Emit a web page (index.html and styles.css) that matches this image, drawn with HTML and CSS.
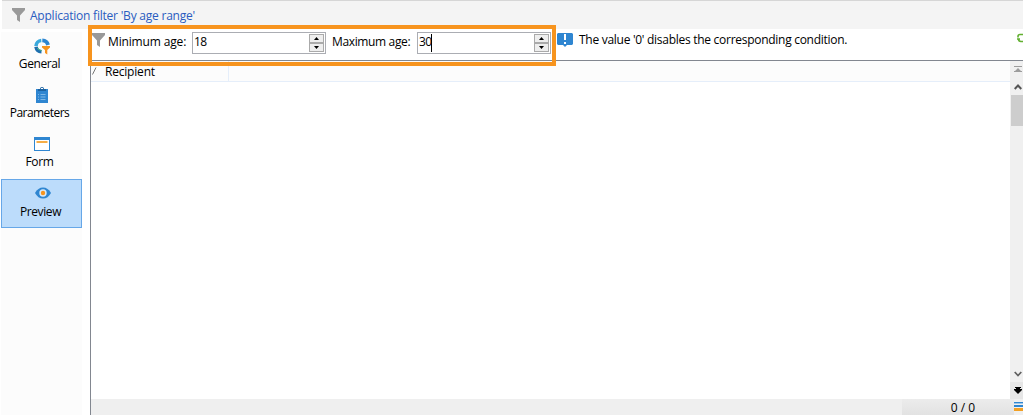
FILE: index.html
```html
<!DOCTYPE html>
<html lang="en">
<head>
<meta charset="utf-8">
<title>Application filter</title>
<link rel="stylesheet" href="styles.css">
</head>
<body>
<div class="app">
  <header class="titlebar">
    <svg class="funnel" width="13" height="14" viewBox="0 0 13 14"><path d="M0 0h13v2L8 7.5V14L5 12V7.5L0 2z"/></svg>
    <span class="title">Application filter 'By age range'</span>
  </header>
  <div class="body">
    <nav class="sidebar">
      <a class="item">
        <svg width="18" height="18" viewBox="0 0 18 18" fill="none">
          <path d="M8.300 3.500A5.800 5.800 0 0 0 3 9" stroke="#3aa9dc" stroke-width="3.600"/>
          <path d="M3 9.800A6 6 0 0 0 8.500 14.800" stroke="#1d6fae" stroke-width="3.600"/>
          <path d="M9.300 3.300A6 6 0 0 1 15 8" stroke="#2f86d1" stroke-width="3.800"/>
          <path d="M4.500 11A5 5 0 0 0 9 13.500" stroke="#55b88a" stroke-width="1.200"/>
          <path d="M9 9h8v1.400L14.300 13v4.600L12 16v-3L9 10.400z" fill="#f7941e"/>
        </svg>
        <span class="l-general">General</span>
      </a>
      <a class="item">
        <svg width="18" height="18" viewBox="0 0 18 18">
          <path d="M3 3h12v14H3z" fill="#2f86d1"/>
          <path d="M5 5V3h2a2 2 0 0 1 4 0h2v2z" fill="#1c62a0"/>
          <path d="M8 2h2v1H8z" fill="#fff"/>
          <path d="M5 8.500h1m1.500 0h5M5 11h1m1.500 0h5M5 13.500h1m1.500 0h5" stroke="#7fb8e6"/>
        </svg>
        <span class="l-parameters">Parameters</span>
      </a>
      <a class="item">
        <svg width="18" height="18" viewBox="0 0 18 18">
          <path d="M1 2h16v14H1z" fill="#2f86d1"/><path d="M2 5h14v10H2z" fill="#fff"/><path d="M3.500 6h11v2h-11z" fill="#f6ad45"/>
        </svg>
        <span class="l-form">Form</span>
      </a>
      <a class="item active">
        <svg width="18" height="18" viewBox="0 0 18 18">
          <path d="M1 9Q4 3.500 9 3.500T17 9Q14 14.500 9 14.500T1 9z" fill="#2f86d1"/><circle cx="9" cy="9" r="3.700" fill="#d7eafa"/><circle cx="9" cy="9" r="2.200" fill="#f7941e"/>
        </svg>
        <span class="l-preview">Preview</span>
      </a>
    </nav>
    <main class="main">
      <div class="filters">
        <svg class="funnel" width="13" height="14" viewBox="0 0 13 14"><path d="M0 0h13v2L8 7.5V14L5 12V7.5L0 2z"/></svg>
        <label class="lab min"><span class="t-min">Minimum age:</span></label>
        <div class="spin spin-min"><span class="num">18</span>
          <div class="arrows"><i><svg width="5" height="3" viewBox="0 0 5 3"><path d="M0 3 2.500 0 5 3z"/></svg></i><i><svg width="5" height="3" viewBox="0 0 5 3"><path d="M0 0h5L2.500 3z"/></svg></i></div>
        </div>
        <label class="lab max"><span class="t-max">Maximum age:</span></label>
        <div class="spin spin-max"><span class="num focus">30</span>
          <div class="arrows"><i><svg width="5" height="3" viewBox="0 0 5 3"><path d="M0 3 2.500 0 5 3z"/></svg></i><i><svg width="5" height="3" viewBox="0 0 5 3"><path d="M0 0h5L2.500 3z"/></svg></i></div>
        </div>
        <svg class="info" width="16" height="14" viewBox="0 0 16 14"><path d="M1 0h14l1 1v10l-1 1h-5l-2 2-2-2H1l-1-1V1z" fill="#2f86d1"/><path d="M7 1h2v6H7zM7 9h2v2H7z" fill="#fff"/></svg>
        <span class="hint">The value '0' disables the corresponding condition.</span>
        <svg class="refresh" width="6" height="10" viewBox="0 0 6 10" fill="none" stroke="#62b030" stroke-width="1.600"><path d="M1 4.500V3.500q0-2 2-2h3M0 6h3M1.500 6q0 2.500 2.500 2.500h2"/></svg>
      </div>
      <section class="list">
        <div class="grid">
          <div class="columns">
            <div class="col first"><svg width="5" height="8" viewBox="0 0 5 8"><path d="M.5 7.500 4 .5" stroke="#777" fill="none"/></svg><span class="recipient">Recipient</span></div>
          </div>
          <div class="rows"></div>
        </div>
        <div class="scroll">
          <div class="cap"><svg width="8" height="7" viewBox="0 0 8 7" fill="#9c9c9c"><path d="M0 0h8v1H0zM4 2l3 3h1v1H0V5h1z"/></svg></div>
          <div class="up"><svg width="8" height="6" viewBox="0 0 8 6"><path d="M.7 5 4 1.500 7.300 5" fill="none" stroke="#555" stroke-width="2"/></svg></div>
          <div class="thumb"></div>
          <div class="down"><svg width="8" height="6" viewBox="0 0 8 6"><path d="M.7 1 4 4.500 7.300 1" fill="none" stroke="#606060" stroke-width="1.700"/></svg></div>
          <div class="cap end"><svg width="8" height="7" viewBox="0 0 8 7"><path d="M1 0h6v1H6v1h2v1L4 7 0 3V2h2V1H1z"/></svg></div>
        </div>
      </section>
      <footer class="status">
        <div class="count"><span>0 / 0</span></div>
        <svg width="9" height="10" viewBox="0 0 9 10"><path d="M0 0h9v1H0zM0 3h9v2H0z" fill="#2f86d1"/><path d="M0 1h9v1H0z" fill="#9cc6ea"/><path d="M0 6h9v3H0z" fill="#f2a024"/></svg>
      </footer>
    </main>
  </div>
  <div class="highlight"></div>
</div>
</body>
</html>
```
FILE: styles.css
```css
* { box-sizing: border-box; }
body { margin: 0; background: #fff; overflow: hidden; font: 12px/16px "Open Sans", "Noto Sans", sans-serif; color: #000; }
svg { display: block; flex: none; }
span { white-space: nowrap; }
.app { position: relative; width: 1023px; height: 415px; display: flex; flex-direction: column; }
.titlebar { height: 29px; flex: none; margin-left: 2px; border-top: 1px solid #d6d6d6; background: #f4f4f4; display: flex; align-items: center; padding-left: 10px; gap: 5px; }
.funnel { fill: #999; }
.title { color: #2a5cc0; letter-spacing: -.22px; padding-top: 1px; }
.body { flex: 1; display: flex; min-height: 0; }
.sidebar { width: 81px; flex: none; margin: 3px 8px 0 1px; background: #fcfcfc; }
.item { height: 49px; display: flex; flex-direction: column; align-items: center; padding-top: 5px; letter-spacing: -.4px; }
.item span { margin-top: 1px; margin-right: 4px; }
.item .l-parameters { letter-spacing: -.55px; }
.item.active { background: #bcdcfb; border: 1px solid #66a7e8; padding-top: 4px; }
.item.active svg { margin-left: 2px; }
.item.active span { margin-top: 2px; margin-right: 2px; }
.main { flex: 1; min-width: 0; display: flex; flex-direction: column; }
.filters { height: 31px; flex: none; display: flex; align-items: flex-start; padding-top: 3px; }
.filters .funnel { margin: 1px 3px 0 2px; }
.lab { margin-top: 2px; letter-spacing: -.15px; }
.min { width: 84px; }
.max { width: 91px; padding-left: 6px; letter-spacing: -.36px; }
.spin { width: 134px; height: 22px; border: 1px solid #abadb3; display: flex; padding: 1px; justify-content: space-between; }
.num { letter-spacing: -.7px; }
.num.focus { border-right: 1px solid #000; height: 18px; }
.arrows { width: 15px; display: flex; flex-direction: column; }
.arrows i { height: 9px; border: 1px solid #aaa; background: #eee; display: flex; align-items: center; justify-content: center; }
.info { margin: 1px 6px 0; }
.hint { letter-spacing: -.28px; }
.refresh { margin: 1px 0 0 auto; }
.list { flex: 1; border-left: 1px solid #828790; border-top: 1px solid #828790; display: flex; min-height: 0; }
.grid { flex: 1; }
.columns { height: 21px; background: #fcfcfc; border-bottom: 1px solid #e5eefa; }
.first { width: 138px; height: 20px; border-right: 1px solid #e5eefa; display: flex; align-items: center; gap: 8px; padding-left: 1px; }
.recipient { padding-top: 2px; letter-spacing: -.2px; }
.scroll { width: 13px; background: #f0f0f0; display: flex; flex-direction: column; }
.scroll > div { display: flex; padding-left: 4px; align-items: center; }
.cap { height: 17px; }
.up { height: 17px; }
.scroll > .thumb { height: 31px; margin-left: 1px; background: #cdcdcd; }
.down { height: 17px; margin-top: auto; }
.end { background: #e6e6e6; }
.status { height: 16px; flex: none; border-left: 1px solid #828790; background: #efefef; display: flex; align-items: center; }
.count { margin-left: auto; width: 112px; height: 16px; padding: 1px 0 0 10px; text-align: center; background: linear-gradient(#ececec, #e2e2e2); }
.highlight { position: absolute; left: 88px; top: 25px; width: 468px; height: 41px; border: 4px solid #f7941e; }
```
